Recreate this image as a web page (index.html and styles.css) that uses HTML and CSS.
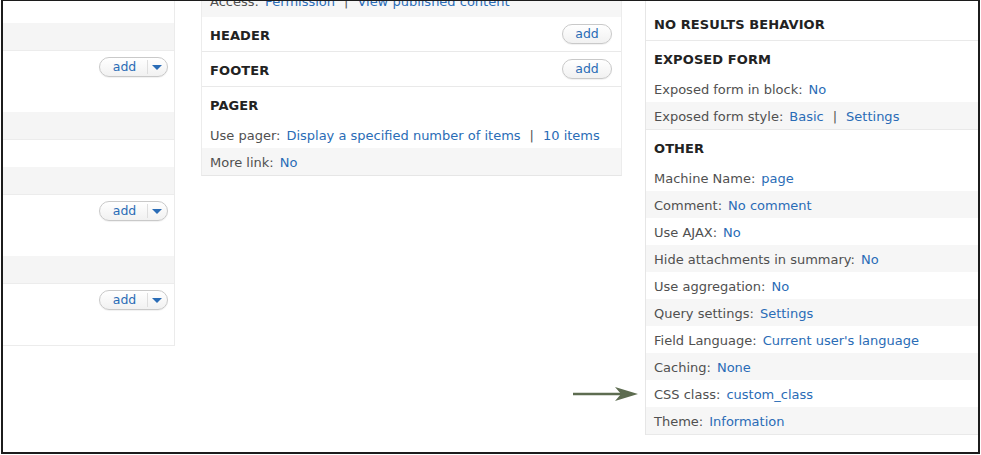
FILE: index.html
```html
<!DOCTYPE html>
<html>
<head>
<meta charset="utf-8">
<link rel="stylesheet" href="styles.css">
</head>
<body>
<div class="frame">
  <div class="lcol">
    <div class="ltop"></div>
    <div class="lhead"></div>
    <div class="lbody tall"><span class="btn split"><span class="btn-main">add</span><span class="btn-drop"><i class="caret"></i></span></span></div>
    <div class="lhead"></div>
    <div class="lbody short"></div>
    <div class="lhead"></div>
    <div class="lbody tall"><span class="btn split"><span class="btn-main">add</span><span class="btn-drop"><i class="caret"></i></span></span></div>
    <div class="lhead"></div>
    <div class="lbody tall last"><span class="btn split"><span class="btn-main">add</span><span class="btn-drop"><i class="caret"></i></span></span></div>
  </div>

  <div class="mcol">
    <div class="row alt first"><span class="lbl">Access:</span><a class="lnk">Permission</a><span class="sep">|</span><a class="lnk">View published content</a></div>
    <div class="sec">
      <div class="head with-btn"><span>HEADER</span><span class="btn">add</span></div>
    </div>
    <div class="sec">
      <div class="head with-btn"><span>FOOTER</span><span class="btn">add</span></div>
    </div>
    <div class="sec nob">
      <div class="head">PAGER</div>
      <div class="row"><span class="lbl">Use pager:</span><a class="lnk">Display a specified number of items</a><span class="sep">|</span><a class="lnk">10 items</a></div>
      <div class="row alt"><span class="lbl">More link:</span><a class="lnk">No</a></div>
    </div>
  </div>

  <div class="rcol">
    <div class="rtop"></div>
    <div class="sec">
      <div class="head">NO RESULTS BEHAVIOR</div>
    </div>
    <div class="sec">
      <div class="head">EXPOSED FORM</div>
      <div class="row"><span class="lbl">Exposed form in block:</span><a class="lnk">No</a></div>
      <div class="row alt"><span class="lbl">Exposed form style:</span><a class="lnk">Basic</a><span class="sep">|</span><a class="lnk">Settings</a></div>
    </div>
    <div class="sec">
      <div class="head">OTHER</div>
      <div class="row"><span class="lbl">Machine Name:</span><a class="lnk">page</a></div>
      <div class="row alt"><span class="lbl">Comment:</span><a class="lnk">No comment</a></div>
      <div class="row"><span class="lbl">Use AJAX:</span><a class="lnk">No</a></div>
      <div class="row alt"><span class="lbl">Hide attachments in summary:</span><a class="lnk">No</a></div>
      <div class="row"><span class="lbl">Use aggregation:</span><a class="lnk">No</a></div>
      <div class="row alt"><span class="lbl">Query settings:</span><a class="lnk">Settings</a></div>
      <div class="row"><span class="lbl">Field Language:</span><a class="lnk">Current user's language</a></div>
      <div class="row alt"><span class="lbl">Caching:</span><a class="lnk">None</a></div>
      <div class="row"><span class="lbl">CSS class:</span><a class="lnk">custom_class</a></div>
      <div class="row alt"><span class="lbl">Theme:</span><a class="lnk">Information</a></div>
    </div>
  </div>

  <svg class="arrow" width="68" height="16" viewBox="0 0 68 16">
    <line x1="0" y1="8" x2="50" y2="8" stroke="#5d6c50" stroke-width="2.4"/>
    <polygon points="42,1 65,8 42,15 48,8" fill="#5d6c50"/>
  </svg>
</div>
</body>
</html>
```

FILE: styles.css
```css
* { box-sizing: border-box; }
html, body { margin: 0; padding: 0; background: #fff; }
body {
  font-family: "DejaVu Sans", Verdana, sans-serif;
  font-size: 13px;
  color: #444;
}
.frame {
  position: relative;
  margin-left: 1px;
  width: 979px;
  height: 454px;
  border: 2px solid #1c1c1c;
  border-top-width: 1px;
  overflow: hidden;
  display: flex;
  align-items: flex-start;
}

/* left column */
.lcol {
  width: 172px;
  flex: none;
  border-right: 1px solid #ebebeb;
}
.ltop { height: 22px; }
.lhead {
  height: 28px;
  background: #f5f5f5;
  border-bottom: 1px solid #ececec;
}
.lbody {
  display: flex;
  justify-content: flex-end;
  align-items: flex-start;
  padding: 6px 6px 0 0;
}
.lbody.tall { height: 61px; }
.lbody.short { height: 27px; }
.lbody.last { height: 62px; border-bottom: 1px solid #ececec; }

/* buttons */
.btn {
  display: inline-flex;
  align-items: center;
  justify-content: center;
  height: 20px;
  width: 50px;
  border: 1px solid #c9c9c9;
  border-radius: 10px;
  background: linear-gradient(#ffffff, #f1f1f1);
  box-shadow: 0 1px 1px rgba(0,0,0,0.06);
  color: #2a6cb6;
  font-size: 12.5px;
  font-weight: normal;
  letter-spacing: 0;
  line-height: 18px;
}
.btn.split {
  width: 69px;
  justify-content: flex-start;
}
.btn-main {
  width: 47px;
  text-align: center;
  padding-left: 2px;
}
.btn-drop {
  flex: 1;
  height: 14px;
  border-left: 1px solid #dedede;
  display: flex;
  align-items: center;
  justify-content: center;
}
.caret {
  display: block;
  width: 0;
  height: 0;
  border-left: 5px solid transparent;
  border-right: 5px solid transparent;
  border-top: 5px solid #2a6cb6;
  margin-right: 1px;
}

/* middle column */
.mcol {
  width: 421px;
  flex: none;
  margin-left: 26px;
  margin-top: -11px;
  border-left: 1px solid #ececec;
  border-right: 1px solid #ececec;
  border-bottom: 1px solid #e6e6e6;
}

/* right column */
.rcol {
  flex: 1;
  margin-left: 23px;
  border-left: 1px solid #e6e6e6;
}
.rtop { height: 5px; }

/* shared */
.sec { border-bottom: 1px solid #e9e9e9; }
.sec.nob { border-bottom: 0; }
.head {
  height: 34px;
  padding: 2px 8px 0;
  display: flex;
  align-items: center;
  font-weight: bold;
  font-size: 13px;
  color: #222;
  letter-spacing: 0.1px;
}
.head.with-btn {
  justify-content: space-between;
  padding-right: 9px;
  padding-top: 0;
}
.head.with-btn span:first-child { padding-top: 3px; }
.row {
  height: 27px;
  line-height: 24px;
  padding: 3px 8px 0;
  white-space: nowrap;
}
.row.first { padding-top: 0; }
.row.alt { background: #f6f6f6; }
.lbl { color: #505050; margin-right: 6px; }
.lnk { color: #2a6cb6; text-decoration: none; }
.sep { color: #555; margin: 0 9px; }

.arrow {
  position: absolute;
  left: 570px;
  top: 385px;
}
```
